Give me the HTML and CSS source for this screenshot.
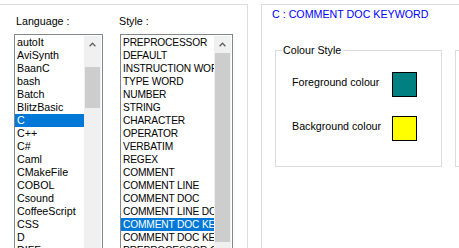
FILE: index.html
```html
<!DOCTYPE html>
<html>
<head>
<meta charset="utf-8">
<link rel="stylesheet" href="styles.css">
</head>
<body>
<div class="page">
  <div class="panel-left">
    <div class="col col-lang">
      <div class="label label-lang">Language :</div>
      <div class="listbox lang-box">
        <div class="items">
          <div class="item">autoIt</div>
          <div class="item">AviSynth</div>
          <div class="item">BaanC</div>
          <div class="item">bash</div>
          <div class="item">Batch</div>
          <div class="item">BlitzBasic</div>
          <div class="item selected">C</div>
          <div class="item">C++</div>
          <div class="item">C#</div>
          <div class="item">Caml</div>
          <div class="item">CMakeFile</div>
          <div class="item">COBOL</div>
          <div class="item">Csound</div>
          <div class="item">CoffeeScript</div>
          <div class="item">CSS</div>
          <div class="item">D</div>
          <div class="item">DIFF</div>
        </div>
        <div class="vscroll">
          <div class="arrow"><svg width="7" height="5" viewBox="0 0 7 5"><polyline points="0.6,4.2 3.5,1.2 6.4,4.2" fill="none" stroke="#606060" stroke-width="1.3"/></svg></div>
          <div class="thumb thumb-lang"></div>
        </div>
      </div>
    </div>
    <div class="col col-style">
      <div class="label label-style">Style :</div>
      <div class="listbox style-box">
        <div class="items style-items">
          <div class="item">PREPROCESSOR</div>
          <div class="item">DEFAULT</div>
          <div class="item">INSTRUCTION WORD</div>
          <div class="item">TYPE WORD</div>
          <div class="item">NUMBER</div>
          <div class="item">STRING</div>
          <div class="item">CHARACTER</div>
          <div class="item">OPERATOR</div>
          <div class="item">VERBATIM</div>
          <div class="item">REGEX</div>
          <div class="item">COMMENT</div>
          <div class="item">COMMENT LINE</div>
          <div class="item">COMMENT DOC</div>
          <div class="item">COMMENT LINE DOC</div>
          <div class="item selected">COMMENT DOC KEYWORD</div>
          <div class="item">COMMENT DOC KEYWORD ERROR</div>
          <div class="item">PREPROCESSOR COMMENT</div>
        </div>
        <div class="vscroll">
          <div class="arrow"><svg width="7" height="5" viewBox="0 0 7 5"><polyline points="0.6,4.2 3.5,1.2 6.4,4.2" fill="none" stroke="#606060" stroke-width="1.3"/></svg></div>
          <div class="thumb thumb-style"></div>
        </div>
      </div>
    </div>
  </div>
  <div class="panel-right">
    <div class="title">C : COMMENT DOC KEYWORD</div>
    <div class="groups">
      <fieldset class="group">
        <legend class="legend">Colour Style</legend>
        <div class="group-body">
          <div class="colour-row">
            <div class="colour-label">Foreground colour</div>
            <div class="swatch swatch-teal"></div>
          </div>
          <div class="colour-row">
            <div class="colour-label">Background colour</div>
            <div class="swatch swatch-yellow"></div>
          </div>
        </div>
      </fieldset>
      <div class="group2"></div>
    </div>
  </div>
</div>
</body>
</html>
```
FILE: styles.css
```css
html, body {
  margin: 0;
  padding: 0;
  background: #ffffff;
  overflow: hidden;
}
body {
  width: 459px;
  height: 248px;
  font-family: "Liberation Sans", Arial, sans-serif;
  font-size: 10.7px;
  line-height: 13px;
  color: #000000;
}
.page {
  display: flex;
  align-items: flex-start;
  width: 459px;
}
.panel-left {
  flex: none;
  box-sizing: content-box;
  width: 233px;
  height: 260px;
  margin-top: 4px;
  padding-left: 14px;
  border-top: 1px solid #dcdcdc;
  border-right: 1px solid #dcdcdc;
  display: flex;
  align-items: flex-start;
}
.col {
  display: flex;
  flex-direction: column;
}
.col-lang {
  width: 89px;
}
.col-style {
  width: 113px;
  margin-left: 17px;
}
.label {
  margin-top: 10px;
  height: 13px;
  white-space: nowrap;
}
.label-lang {
  padding-left: 2px;
}
.label-style {
  margin-left: -1px;
}
.listbox {
  margin-top: 6px;
  height: 220px;
  border: 1px solid #828790;
  padding: 1px 1px 1px 0;
  display: flex;
  background: #ffffff;
}
.items {
  flex: 1;
  min-width: 0;
  overflow: hidden;
}
.item {
  height: 13px;
  padding-left: 2px;
  white-space: nowrap;
  overflow: hidden;
}
.style-items .item {
  font-size: 10.2px;
  letter-spacing: -0.15px;
}
.item.selected {
  background: #0078d7;
  color: #ffffff;
}
.vscroll {
  flex: none;
  width: 17px;
  background: #f0f0f0;
  display: flex;
  flex-direction: column;
}
.arrow {
  height: 17px;
  display: flex;
  align-items: center;
  justify-content: center;
}
.arrow svg {
  display: block;
}
.thumb {
  margin: 0 1px;
  background: #cdcdcd;
}
.thumb-lang {
  margin-top: 14px;
  height: 41px;
}
.thumb-style {
  margin-top: 0;
  height: 189px;
}
.panel-right {
  flex: 1;
  margin-left: 13px;
  margin-top: 4px;
  height: 260px;
  border-top: 1px solid #dcdcdc;
  border-left: 1px solid #dcdcdc;
  min-width: 0;
  overflow: hidden;
}
.title {
  margin-top: 3px;
  padding-left: 10px;
  color: #0000ff;
  white-space: nowrap;
}
.groups {
  display: flex;
  align-items: flex-start;
  margin-top: 23px;
  margin-left: 13px;
}
.group {
  flex: none;
  width: 167px;
  box-sizing: border-box;
  margin: 0;
  padding: 0;
  border: 1px solid #dcdcdc;
  min-width: 0;
}
.legend {
  margin-left: 6px;
  padding: 0 2px 0 1px;
  line-height: 13px;
  height: 13px;
  white-space: nowrap;
}
.group-body {
  padding: 15px 0 25px 16px;
  display: flex;
  flex-direction: column;
  gap: 19px;
}
.colour-row {
  display: flex;
  align-items: flex-start;
}
.colour-label {
  width: 100px;
  margin-top: 4px;
  white-space: nowrap;
}
.swatch {
  width: 25px;
  height: 25px;
  box-sizing: border-box;
  border: 1px solid #000000;
}
.swatch-teal {
  background: #008080;
}
.swatch-yellow {
  background: #ffff00;
}
.group2 {
  flex: none;
  width: 120px;
  height: 117px;
  box-sizing: border-box;
  margin-top: 6px;
  margin-left: 13px;
  border: 1px solid #dcdcdc;
}
```
